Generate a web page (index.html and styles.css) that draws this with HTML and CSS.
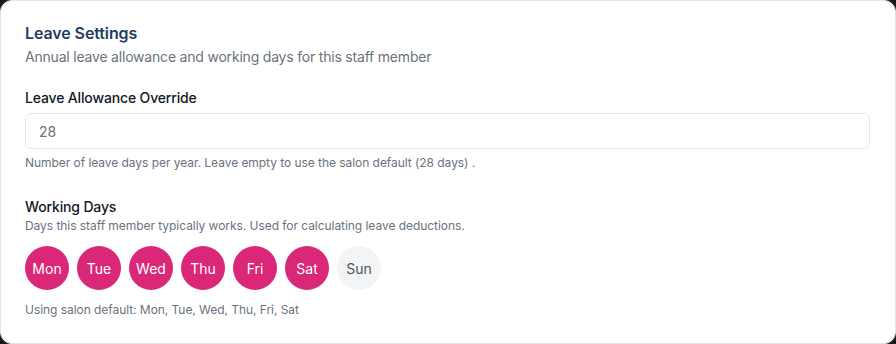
FILE: index.html
```html
<!DOCTYPE html>
<html lang="en">
<head>
<meta charset="utf-8">
<title>Leave Settings</title>
<link rel="stylesheet" href="styles.css">
</head>
<body>
<section class="card">
  <h2 class="title">Leave Settings</h2>
  <p class="subtitle">Annual leave allowance and working days for this staff member</p>

  <div class="field">
    <label class="label" for="allowance">Leave Allowance Override</label>
    <input class="input" id="allowance" type="text" placeholder="28">
    <p class="help">Number of leave days per year. Leave empty to use the salon default (28 days) .</p>
  </div>

  <div class="field field-days">
    <div class="label">Working Days</div>
    <p class="desc">Days this staff member typically works. Used for calculating leave deductions.</p>
    <div class="days">
      <button class="day on">Mon</button>
      <button class="day on">Tue</button>
      <button class="day on">Wed</button>
      <button class="day on">Thu</button>
      <button class="day on">Fri</button>
      <button class="day on">Sat</button>
      <button class="day">Sun</button>
    </div>
    <p class="help help-days">Using salon default: Mon, Tue, Wed, Thu, Fri, Sat</p>
  </div>
</section>
</body>
</html>
```

FILE: styles.css
```css
* { box-sizing: border-box; }
html, body { height: 100%; }
body {
  margin: 0;
  background: #1a1a1a;
  font-family: Inter, "Noto Sans", sans-serif;
  -webkit-font-smoothing: antialiased;
}
.card {
  height: 344px;
  background: #fff;
  border: 1px solid #e5e7eb;
  border-radius: 12px;
  padding: 20px 25px 24px 24px;
}
.title {
  margin: 0;
  font-size: 16px;
  line-height: 24px;
  font-weight: 600;
  color: #1f3d62;
  letter-spacing: -0.1px;
}
.subtitle {
  margin: 2px 0 0;
  font-size: 14px;
  line-height: 20px;
  color: #6b7280;
  letter-spacing: -0.2px;
}
.field { margin-top: 21px; }
.label {
  display: block;
  font-size: 14px;
  line-height: 20px;
  font-weight: 500;
  color: #111827;
  letter-spacing: -0.15px;
}
.input {
  display: block;
  width: 100%;
  height: 36px;
  margin-top: 5px;
  padding: 0 13px;
  border: 1px solid #e5e7eb;
  border-radius: 6px;
  font-family: inherit;
  font-size: 14px;
  color: #111827;
  background: #fff;
  outline: none;
}
.input::placeholder { color: #6b7280; }
.help {
  margin: 6px 0 0;
  font-size: 12px;
  line-height: 16px;
  color: #6b7280;
  letter-spacing: -0.05px;
}
.field-days { margin-top: 26px; }
.desc {
  margin: 1px 0 0;
  font-size: 12px;
  line-height: 16px;
  color: #6b7280;
  letter-spacing: -0.05px;
}
.days {
  display: flex;
  gap: 8px;
  margin-top: 12px;
}
.day {
  width: 44px;
  height: 44px;
  border: 0;
  border-radius: 50%;
  padding: 0;
  font-family: inherit;
  font-size: 14px;
  font-weight: 400;
  background: #f3f4f6;
  color: #4b5563;
}
.day.on {
  background: #db2777;
  color: #fff;
}
.help-days { margin-top: 12px; }
```
